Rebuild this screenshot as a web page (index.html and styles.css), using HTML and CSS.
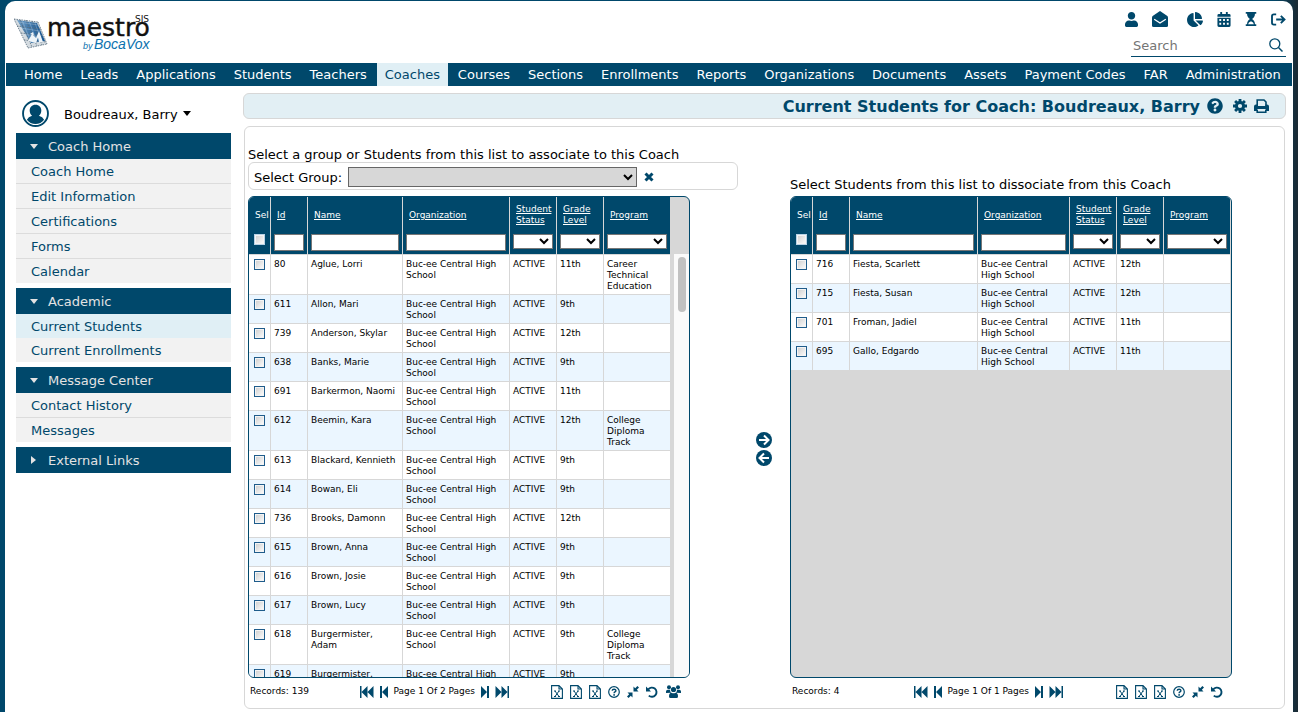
FILE: index.html
```
<!DOCTYPE html>
<html lang="en">
<head>
	<meta charset="UTF-8">
	<meta name="viewport" content="width=device-width, initial-scale=1.0">
	<title>Current Students for Coach</title>
	<link rel="stylesheet" href="styles.css">
</head>
<body>
	<!-- icon sprite -->
	<svg class="sprite" aria-hidden="true">
		<symbol id="i-user" viewBox="0 0 448 512"><path d="M224 256c70.7 0 128-57.3 128-128S294.7 0 224 0 96 57.3 96 128s57.3 128 128 128zm89.6 32h-16.7c-22.2 10.2-46.9 16-72.9 16s-50.6-5.8-72.9-16h-16.7C60.2 288 0 348.2 0 422.4V464c0 26.500 21.500 48 48 48h352c26.500 0 48-21.500 48-48v-41.600c0-74.200-60.200-134.400-134.400-134.400z"/></symbol>
		<symbol id="i-mail" viewBox="0 0 16 16"><path d="M8 0L1 4.800Q0 5.500 0 6.500V14.500Q0 16 1.500 16h13Q16 16 16 14.500V6.500Q16 5.500 15 4.800z"/><path d="M2.200 8.200L8 12l5.800-3.800" fill="none" stroke="#fff" stroke-width="1.300"/></symbol>
		<symbol id="i-pie" viewBox="0 0 544 512"><path d="M527.79 288H290.5l158.03 158.03c6.04 6.04 15.98 6.53 22.19.68 38.7-36.46 65.32-85.61 73.13-140.86 1.34-9.46-6.51-17.85-16.06-17.85zm-15.83-64.8C503.72 103.74 408.26 8.28 288.8.04 279.68-.59 272 7.1 272 16.24V240h223.77c9.14 0 16.82-7.68 16.19-16.8zM224 288V50.71c0-9.55-8.39-17.4-17.84-16.06C86.99 51.49-4.1 155.6.14 280.37 4.5 408.51 114.83 513.59 243.03 511.98c50.4-.63 96.97-16.87 135.26-44.03 7.9-5.6 8.42-17.23 1.57-24.08L224 288z"/></symbol>
		<symbol id="i-calendar" viewBox="0 0 14 16"><path fill-rule="evenodd" d="M3 0h2v2h4V0h2v2h1.500Q14 2 14 3.500V5H0V3.500Q0 2 1.500 2H3zM0 6h14v8.500Q14 16 12.500 16h-11Q0 16 0 14.500zM2 7.500v2h2v-2zM6 7.500v2h2v-2zM10 7.500v2h2v-2zM2 11.500v2h2v-2zM6 11.500v2h2v-2zM10 11.500v2h2v-2z"/></symbol>
		<symbol id="i-hourglass" viewBox="0 0 12 16"><path d="M0 0h12v2H0zM0 14h12v2H0zM1.500 2h9Q10.500 6 7.200 8 10.500 10 10.500 14h-1.200Q9 11.500 6 10.500 3 11.500 2.700 14H1.500Q1.500 10 4.800 8 1.500 6 1.500 2z"/></symbol>
		<symbol id="i-exit" viewBox="0 0 16 14"><path d="M5.500 1.500H3Q1 1.500 1 3.500v7q0 2 2 2h2.500M5.500 7H14M10.500 3l4 4-4 4" fill="none" stroke="currentColor" stroke-width="2"/></symbol>
		<symbol id="i-search" viewBox="0 0 14 14"><circle cx="5.800" cy="5.800" r="5" fill="none" stroke="currentColor" stroke-width="1.300"/><path d="M9.500 9.500l4 4" stroke="currentColor" stroke-width="1.500"/></symbol>
		<symbol id="i-help" viewBox="0 0 512 512"><path d="M504 256c0 136.997-111.043 248-248 248S8 392.997 8 256C8 119.083 119.043 8 256 8s248 111.083 248 248zM262.655 90c-54.497 0-89.255 22.957-116.549 63.758-3.536 5.286-2.353 12.415 2.715 16.258l34.699 26.31c5.205 3.947 12.621 3.008 16.665-2.122 17.864-22.658 30.113-35.797 57.303-35.797 20.429 0 45.698 13.148 45.698 32.958 0 14.976-12.363 22.667-32.534 33.976C247.128 238.528 216 254.941 216 296v4c0 6.627 5.373 12 12 12h56c6.627 0 12-5.373 12-12v-1.333c0-28.462 83.186-29.647 83.186-106.667 0-58.002-60.165-102-116.531-102zM256 338c-25.365 0-46 20.635-46 46 0 25.364 20.635 46 46 46s46-20.636 46-46c0-25.365-20.635-46-46-46z"/></symbol>
		<symbol id="i-gear" viewBox="0 0 14 14"><circle cx="7" cy="7" r="3.600" fill="none" stroke="currentColor" stroke-width="3"/><path d="M7 0v3M7 11v3M0 7h3M11 7h3M2.100 2.100l2 2M9.900 9.900l2 2M2.100 11.900l2-2M9.900 4.100l2-2" stroke="currentColor" stroke-width="2.800"/></symbol>
		<symbol id="i-print" viewBox="0 0 15 14"><path d="M3.200 7V1h6.800l2 2v4M3.200 10.500v2.700h8.600v-2.700" fill="none" stroke="currentColor" stroke-width="1.600"/><path fill-rule="evenodd" d="M2 5.500h1.500V7h8V5.500H13q2 0 2 2V12h-3v-2H3v2H0V7.500q0-2 2-2z"/></symbol>
		<symbol id="i-avatar" viewBox="0 0 26 26"><circle cx="13" cy="13" r="12" fill="#fff" stroke="currentColor" stroke-width="1.800"/><path d="M13 4.500c3.500 0 5.600 2.500 5.600 5.500 0 2-.8 4-2.300 5.200q3.700.8 5 3.800A10.300 10.300 0 0 1 4.700 19q1.300-3 5-3.800C8.200 14 7.400 12 7.400 10c0-3 2.100-5.500 5.600-5.500z"/></symbol>
		<symbol id="i-close" viewBox="0 0 10 10"><path d="M1.500 1.500l7 7M8.500 1.500l-7 7" stroke="currentColor" stroke-width="3"/></symbol>
		<symbol id="i-right" viewBox="0 0 16 16"><circle cx="8" cy="8" r="8"/><path d="M3 8h9M8 3.500L12.500 8 8 12.500" fill="none" stroke="#fff" stroke-width="2"/></symbol>
		<symbol id="i-left" viewBox="0 0 16 16"><circle cx="8" cy="8" r="8"/><path d="M13 8H4M8 3.500L3.500 8 8 12.500" fill="none" stroke="#fff" stroke-width="2"/></symbol>
		<symbol id="i-first" viewBox="0 0 14 12"><path d="M0 0h1.500v12H0zM1.500 6L7.500 0v12zM7.500 6L13.500 0v12z"/></symbol>
		<symbol id="i-prev" viewBox="0 0 8 12"><path d="M0 0h2v12H0zM2 6l6-6v12z"/></symbol>
		<symbol id="i-next" viewBox="0 0 8 12"><path d="M6 0h2v12H6zM6 6L0 0v12z"/></symbol>
		<symbol id="i-last" viewBox="0 0 14 12"><path d="M12.500 0H14v12h-1.500zM12.500 6L6.500 0v12zM6.500 6L.5 0v12z"/></symbol>
		<symbol id="i-file" viewBox="0 0 12 14"><path d="M.6.6h7.400l3.400 3.400v9.400H.6zM8 .6V4h3.400" fill="none" stroke="currentColor" stroke-width="1.100"/><path d="M4 6l4 5.500M8 6l-4 5.500M3 6h2M7 6h2M3 11.500h2M7 11.500h2" fill="none" stroke="currentColor"/></symbol>
		<symbol id="i-ask" viewBox="0 0 12 12"><circle cx="6" cy="6" r="5.300" fill="none" stroke="currentColor" stroke-width="1.200"/><path d="M4.200 4.800C4.300 2.700 7.900 2.700 7.900 4.700 7.900 6 6.100 5.900 6.100 7.200" fill="none" stroke="currentColor" stroke-width="1.400"/><circle cx="6.100" cy="8.900" r=".9"/></symbol>
		<symbol id="i-shrink" viewBox="0 0 12 12"><path d="M6.500 0.500v5h5L9.800 3.800 12 1.600 10.400 0 8.200 2.200zM5.500 11.500v-5h-5l1.700 1.700L0 10.400 1.600 12l2.200-2.200z"/></symbol>
		<symbol id="i-undo" viewBox="0 0 12 12"><path d="M0 0.500v5h5L3.300 3.800z"/><path d="M2.200 3.500A4.600 4.600 0 1 1 2.800 9.600" fill="none" stroke="currentColor" stroke-width="1.900"/></symbol>
		<symbol id="i-group" viewBox="0 0 15 13"><circle cx="3" cy="2.200" r="2"/><circle cx="12" cy="2.200" r="2"/><circle cx="7.500" cy="4.500" r="2.600"/><path d="M0 8V6.500Q0 4.700 1.800 4.700H4q0 2 1.200 3zM15 8V6.500q0-1.800-1.800-1.800H11q0 2-1.200 3zM3 11.500q0-3.700 2.500-3.700 2 1 4 0 2.500 0 2.500 3.700 0 1.500-1.500 1.500h-6Q3 13 3 11.500z"/></symbol>
	</svg>

	<div class="page">
		<header class="topbar">
			<a href="#" class="logo" aria-label="Maestro SIS by BocaVox">
				<svg width="140" height="38" viewBox="0 0 140 38">
					<defs>
						<linearGradient id="tile" x1="0" x2="1"><stop offset="0" stop-color="#6b9cc6"/><stop offset="1" stop-color="#0f4f8c"/></linearGradient>
					</defs>
					<path d="M0 5l24 3 9 22-19 4z" fill="#d4dbe0"/>
					<path d="M3 6l20 3 8 18-14 2z" fill="url(#tile)"/>
					<path d="M0 5l24 3M3 12l24 3M7 19l22 3M10 26l22 2M0 5l14 29M6 6l12 27M12 6l11 26M18 7l10 24M24 8l9 22M14 34l19-4" stroke="#566b7c" stroke-width=".8" stroke-dasharray="1.500 1" fill="none"/>
					<path d="M4 8l20 3M6 14l20 3M9 20l18 3M8 6l9 22M15 7l8 21M21 9l6 17" stroke="#cfe2f2" stroke-width=".3" fill="none"/>
					<path d="M14 27l4-7 4 4 3-7 4 11-4 .5-1-5-2 5.500zM16 20l3-2 1 3z" fill="#eef4f8"/>
					<text x="33" y="22" class="logo-name">maestro</text>
					<text x="121" y="8" class="logo-sis">SIS</text>
					<text x="69" y="35" class="logo-by">by</text>
					<text x="80" y="35" class="logo-vendor">BocaVox</text>
				</svg>
			</a>
			<div class="topbar-right">
				<div class="quick-links">
					<a href="#" aria-label="Profile"><svg width="13" height="15"><use href="#i-user"/></svg></a>
					<a href="#" class="mail" aria-label="Messages"><svg width="16" height="16"><use href="#i-mail"/></svg></a>
					<a href="#" aria-label="Reports"><svg width="16" height="15"><use href="#i-pie"/></svg></a>
					<a href="#" aria-label="Calendar"><svg width="14" height="15"><use href="#i-calendar"/></svg></a>
					<a href="#" aria-label="Time clock"><svg width="12" height="14"><use href="#i-hourglass"/></svg></a>
					<a href="#" aria-label="Log out"><svg width="15" height="13"><use href="#i-exit"/></svg></a>
				</div>
				<form class="search">
					<input type="text" placeholder="Search" aria-label="Search">
					<button type="button" aria-label="Run search"><svg width="14" height="14"><use href="#i-search"/></svg></button>
				</form>
			</div>
		</header>

		<nav class="main-nav">
			<a href="#">Home</a>
			<a href="#">Leads</a>
			<a href="#">Applications</a>
			<a href="#">Students</a>
			<a href="#">Teachers</a>
			<a href="#" class="active">Coaches</a>
			<a href="#">Courses</a>
			<a href="#">Sections</a>
			<a href="#">Enrollments</a>
			<a href="#">Reports</a>
			<a href="#">Organizations</a>
			<a href="#">Documents</a>
			<a href="#">Assets</a>
			<a href="#">Payment Codes</a>
			<a href="#">FAR</a>
			<a href="#">Administration</a>
		</nav>

		<div class="body">
			<aside class="sidebar">
				<button type="button" class="user">
					<svg width="27" height="27"><use href="#i-avatar"/></svg>
					<span>Boudreaux, Barry</span>
					<i class="caret"></i>
				</button>
				<section>
					<button type="button" class="side-head"><i class="caret"></i>Coach Home</button>
					<a href="#">Coach Home</a>
					<a href="#">Edit Information</a>
					<a href="#">Certifications</a>
					<a href="#">Forms</a>
					<a href="#">Calendar</a>
				</section>
				<section>
					<button type="button" class="side-head"><i class="caret"></i>Academic</button>
					<a href="#" class="active">Current Students</a>
					<a href="#">Current Enrollments</a>
				</section>
				<section>
					<button type="button" class="side-head"><i class="caret"></i>Message Center</button>
					<a href="#">Contact History</a>
					<a href="#">Messages</a>
				</section>
				<section>
					<button type="button" class="side-head"><i class="caret closed"></i>External Links</button>
				</section>
			</aside>

			<main>
				<div class="title-bar">
					<h1>Current Students for Coach: Boudreaux, Barry</h1>
					<a href="#" class="title-help" aria-label="Help"><svg width="16" height="16"><use href="#i-help"/></svg></a>
					<a href="#" aria-label="Settings"><svg width="14" height="14"><use href="#i-gear"/></svg></a>
					<a href="#" aria-label="Print"><svg width="15" height="14"><use href="#i-print"/></svg></a>
				</div>

				<div class="panel">
					<div class="intro">
						<p>Select a group or Students from this list to associate to this Coach</p>
						<div class="group-box">
							<label for="group">Select Group:</label>
							<select id="group"><option></option></select>
							<button type="button" aria-label="Clear group"><svg width="10" height="10"><use href="#i-close"/></svg></button>
						</div>
					</div>
					<div class="intro intro-right">
						<p>Select Students from this list to dissociate from this Coach</p>
					</div>

					<div class="list">
						<div class="list-frame">
							<table class="has-scroll">
								<colgroup><col class="c-sel"><col class="c-id"><col class="c-name"><col class="c-org"><col class="c-status"><col class="c-grade"><col class="c-program"></colgroup>
								<thead>
									<tr class="labels"><th>Sel</th><th><a href="#">Id</a></th><th><a href="#">Name</a></th><th><a href="#">Organization</a></th><th><a href="#">Student Status</a></th><th><a href="#">Grade Level</a></th><th><a href="#">Program</a></th></tr>
									<tr class="filters">
										<td><input type="checkbox" aria-label="Select all"></td>
										<td><input type="text" aria-label="Filter id"></td>
										<td><input type="text" aria-label="Filter name"></td>
										<td><input type="text" aria-label="Filter organization"></td>
										<td><select aria-label="Filter status"><option></option></select></td>
										<td><select aria-label="Filter grade"><option></option></select></td>
										<td><select aria-label="Filter program"><option></option></select></td>
									</tr>
								</thead>
								<tbody>
									<tr><td><input type="checkbox" aria-label="Select 80"></td><td>80</td><td>Aglue, Lorri</td><td>Buc-ee Central High School</td><td>ACTIVE</td><td>11th</td><td>Career Technical Education</td></tr>
									<tr><td><input type="checkbox" aria-label="Select 611"></td><td>611</td><td>Allon, Mari</td><td>Buc-ee Central High School</td><td>ACTIVE</td><td>9th</td><td></td></tr>
									<tr><td><input type="checkbox" aria-label="Select 739"></td><td>739</td><td>Anderson, Skylar</td><td>Buc-ee Central High School</td><td>ACTIVE</td><td>12th</td><td></td></tr>
									<tr><td><input type="checkbox" aria-label="Select 638"></td><td>638</td><td>Banks, Marie</td><td>Buc-ee Central High School</td><td>ACTIVE</td><td>9th</td><td></td></tr>
									<tr><td><input type="checkbox" aria-label="Select 691"></td><td>691</td><td>Barkermon, Naomi</td><td>Buc-ee Central High School</td><td>ACTIVE</td><td>11th</td><td></td></tr>
									<tr><td><input type="checkbox" aria-label="Select 612"></td><td>612</td><td>Beemin, Kara</td><td>Buc-ee Central High School</td><td>ACTIVE</td><td>12th</td><td>College Diploma Track</td></tr>
									<tr><td><input type="checkbox" aria-label="Select 613"></td><td>613</td><td>Blackard, Kennieth</td><td>Buc-ee Central High School</td><td>ACTIVE</td><td>9th</td><td></td></tr>
									<tr><td><input type="checkbox" aria-label="Select 614"></td><td>614</td><td>Bowan, Eli</td><td>Buc-ee Central High School</td><td>ACTIVE</td><td>9th</td><td></td></tr>
									<tr><td><input type="checkbox" aria-label="Select 736"></td><td>736</td><td>Brooks, Damonn</td><td>Buc-ee Central High School</td><td>ACTIVE</td><td>12th</td><td></td></tr>
									<tr><td><input type="checkbox" aria-label="Select 615"></td><td>615</td><td>Brown, Anna</td><td>Buc-ee Central High School</td><td>ACTIVE</td><td>9th</td><td></td></tr>
									<tr><td><input type="checkbox" aria-label="Select 616"></td><td>616</td><td>Brown, Josie</td><td>Buc-ee Central High School</td><td>ACTIVE</td><td>9th</td><td></td></tr>
									<tr><td><input type="checkbox" aria-label="Select 617"></td><td>617</td><td>Brown, Lucy</td><td>Buc-ee Central High School</td><td>ACTIVE</td><td>9th</td><td></td></tr>
									<tr><td><input type="checkbox" aria-label="Select 618"></td><td>618</td><td>Burgermister, Adam</td><td>Buc-ee Central High School</td><td>ACTIVE</td><td>9th</td><td>College Diploma Track</td></tr>
									<tr><td><input type="checkbox" aria-label="Select 619"></td><td>619</td><td>Burgermister,</td><td>Buc-ee Central High School</td><td>ACTIVE</td><td>9th</td><td></td></tr>
								</tbody>
							</table>
							<div class="scroll-track"><div class="scroll-thumb"></div></div>
						</div>
						<div class="list-foot">
							<span class="records">Records: 139</span>
							<div class="pager">
								<button type="button" aria-label="First page"><svg width="14" height="12"><use href="#i-first"/></svg></button>
								<button type="button" aria-label="Previous page"><svg width="8" height="12"><use href="#i-prev"/></svg></button>
								<span>Page 1 Of 2 Pages</span>
								<button type="button" aria-label="Next page"><svg width="8" height="12"><use href="#i-next"/></svg></button>
								<button type="button" aria-label="Last page"><svg width="14" height="12"><use href="#i-last"/></svg></button>
							</div>
							<div class="tools">
								<button type="button" aria-label="Export page"><svg width="12" height="14"><use href="#i-file"/></svg></button>
								<button type="button" aria-label="Export all"><svg width="12" height="14"><use href="#i-file"/></svg></button>
								<button type="button" aria-label="Export selected"><svg width="12" height="14"><use href="#i-file"/></svg></button>
								<button type="button" aria-label="Help"><svg width="12" height="12"><use href="#i-ask"/></svg></button>
								<button type="button" aria-label="Shrink"><svg width="12" height="12"><use href="#i-shrink"/></svg></button>
								<button type="button" aria-label="Reset"><svg width="12" height="12"><use href="#i-undo"/></svg></button>
								<button type="button" aria-label="Groups"><svg width="15" height="13"><use href="#i-group"/></svg></button>
							</div>
						</div>
					</div>

					<div class="movers">
						<button type="button" aria-label="Associate selected"><svg width="16" height="16"><use href="#i-right"/></svg></button>
						<button type="button" aria-label="Dissociate selected"><svg width="16" height="16"><use href="#i-left"/></svg></button>
					</div>

					<div class="list">
						<div class="list-frame">
							<table>
								<colgroup><col class="c-sel"><col class="c-id"><col class="c-name"><col class="c-org-narrow"><col class="c-status"><col class="c-grade"><col class="c-program"></colgroup>
								<thead>
									<tr class="labels"><th>Sel</th><th><a href="#">Id</a></th><th><a href="#">Name</a></th><th><a href="#">Organization</a></th><th><a href="#">Student Status</a></th><th><a href="#">Grade Level</a></th><th><a href="#">Program</a></th></tr>
									<tr class="filters">
										<td><input type="checkbox" aria-label="Select all"></td>
										<td><input type="text" aria-label="Filter id"></td>
										<td><input type="text" aria-label="Filter name"></td>
										<td><input type="text" aria-label="Filter organization"></td>
										<td><select aria-label="Filter status"><option></option></select></td>
										<td><select aria-label="Filter grade"><option></option></select></td>
										<td><select aria-label="Filter program"><option></option></select></td>
									</tr>
								</thead>
								<tbody>
									<tr><td><input type="checkbox" aria-label="Select 716"></td><td>716</td><td>Fiesta, Scarlett</td><td>Buc-ee Central High School</td><td>ACTIVE</td><td>12th</td><td></td></tr>
									<tr><td><input type="checkbox" aria-label="Select 715"></td><td>715</td><td>Fiesta, Susan</td><td>Buc-ee Central High School</td><td>ACTIVE</td><td>12th</td><td></td></tr>
									<tr><td><input type="checkbox" aria-label="Select 701"></td><td>701</td><td>Froman, Jadiel</td><td>Buc-ee Central High School</td><td>ACTIVE</td><td>11th</td><td></td></tr>
									<tr><td><input type="checkbox" aria-label="Select 695"></td><td>695</td><td>Gallo, Edgardo</td><td>Buc-ee Central High School</td><td>ACTIVE</td><td>11th</td><td></td></tr>
								</tbody>
							</table>
						</div>
						<div class="list-foot short">
							<span class="records">Records: 4</span>
							<div class="pager">
								<button type="button" aria-label="First page"><svg width="14" height="12"><use href="#i-first"/></svg></button>
								<button type="button" aria-label="Previous page"><svg width="8" height="12"><use href="#i-prev"/></svg></button>
								<span>Page 1 Of 1 Pages</span>
								<button type="button" aria-label="Next page"><svg width="8" height="12"><use href="#i-next"/></svg></button>
								<button type="button" aria-label="Last page"><svg width="14" height="12"><use href="#i-last"/></svg></button>
							</div>
							<div class="tools">
								<button type="button" aria-label="Export page"><svg width="12" height="14"><use href="#i-file"/></svg></button>
								<button type="button" aria-label="Export all"><svg width="12" height="14"><use href="#i-file"/></svg></button>
								<button type="button" aria-label="Export selected"><svg width="12" height="14"><use href="#i-file"/></svg></button>
								<button type="button" aria-label="Help"><svg width="12" height="12"><use href="#i-ask"/></svg></button>
								<button type="button" aria-label="Shrink"><svg width="12" height="12"><use href="#i-shrink"/></svg></button>
								<button type="button" aria-label="Reset"><svg width="12" height="12"><use href="#i-undo"/></svg></button>
							</div>
						</div>
					</div>
				</div>
			</main>
		</div>
	</div>
</body>
</html>
```
FILE: styles.css
```
* {
	box-sizing: border-box;
}

body {
	margin: 0;
	padding: 1px 5px 0;
	height: 100vh;
	background: linear-gradient(90deg, #00486b 98%, #1b2a33 100%);
	color: #000;
	font-family: Verdana, "DejaVu Sans", sans-serif;
	font-size: 13px;
}

a {
	color: #00486b;
	text-decoration: none;
}

svg {
	display: block;
	fill: currentColor;
}

button {
	padding: 0;
	border: none;
	background: none;
	color: #00486b;
	font: inherit;
	cursor: pointer;
}

p, h1 {
	margin: 0;
}

.sprite {
	display: none;
}

.page {
	height: 100%;
	display: flex;
	flex-direction: column;
	background: #fff;
	border-radius: 10px 10px 0 0;
}

/* header */
.topbar {
	height: 62px;
	flex: none;
	display: flex;
	justify-content: space-between;
	padding: 9px 7px 0 9px;
}

.logo {
	padding-top: 4px;
}

.logo-name {
	font-size: 25px;
	fill: #111;
	stroke: #111;
	stroke-width: 0.4;
}

.logo-sis {
	font-size: 9px;
	fill: #111;
}

.logo-by, .logo-vendor {
	font-family: "Liberation Sans", Arial, sans-serif;
	font-style: italic;
	fill: #0b72ae;
}

.logo-by {
	font-size: 9px;
}

.logo-vendor {
	font-size: 14px;
}

.topbar-right {
	display: flex;
	flex-direction: column;
	align-items: flex-end;
}

.quick-links {
	height: 18px;
	display: flex;
	align-items: center;
	gap: 14px;
}

.mail {
	margin-right: 5px;
}

.search {
	width: 155px;
	height: 29px;
	display: flex;
	align-items: center;
	border-bottom: 1px solid #00486b;
	padding: 6px 3px 0 2px;
}

.search input {
	flex: 1;
	min-width: 0;
	padding: 0;
	border: none;
	outline: none;
	background: none;
	font: inherit;
}

.search input::placeholder {
	color: #757575;
}

.main-nav {
	flex: none;
	height: 23px;
	margin: 0 1px;
	padding: 0 3px 0 10px;
	display: flex;
	justify-content: space-between;
	background: #00486b;
}

.main-nav a {
	padding: 0 8px;
	line-height: 23px;
	color: #fff;
	white-space: nowrap;
}

.main-nav a.active {
	background: #e0eff5;
	color: #00486b;
}

.body {
	flex: 1;
	min-height: 0;
	display: flex;
	gap: 12px;
	padding: 7px 7px 3px 11px;
}

/* sidebar */
.sidebar {
	width: 215px;
	flex: none;
}

.user {
	height: 40px;
	display: flex;
	align-items: center;
	padding-left: 6px;
}

.user span {
	margin: 2px 5px 0 15px;
	color: #000;
}

.caret {
	border: 4px solid transparent;
	border-top: 5px solid currentColor;
	border-bottom: none;
}

.caret.closed {
	border: 4px solid transparent;
	border-left: 5px solid currentColor;
	border-right: none;
}

.user .caret {
	color: #000;
}

.sidebar section {
	margin-bottom: 5px;
}

.side-head {
	width: 100%;
	height: 26px;
	display: flex;
	align-items: center;
	gap: 10px;
	padding-left: 14px;
	background: #00486b;
	color: #e3e3e3;
}

.side-head .closed {
	margin: 0 2px 0 1px;
}

.sidebar a {
	display: block;
	padding: 2px 0 0 15px;
	line-height: 22px;
	background: #f2f2f2;
	border-bottom: 1px solid #dcdcdc;
}

.sidebar a:last-child {
	border-bottom: none;
}

.sidebar a.active {
	background: #e0eff5;
	border-bottom: none;
}

/* content */
main {
	flex: 1;
	min-width: 0;
	display: flex;
	flex-direction: column;
}

.title-bar {
	height: 26px;
	flex: none;
	display: flex;
	align-items: center;
	justify-content: flex-end;
	gap: 7px;
	padding-right: 16px;
	background: #e2eff4;
	border: 1px solid #d7d7d7;
	border-radius: 6px;
}

.title-bar h1 {
	font-size: 16px;
	color: #00486b;
}

.title-help {
	margin-right: 3px;
}

.panel {
	flex: 1;
	min-height: 0;
	margin: 7px 1px 0;
	padding: 20px 3px 6px;
	border: 1px solid #d7d7d7;
	border-radius: 6px;
	display: grid;
	grid-template-columns: 490px 52px 442px;
	grid-template-rows: auto 1fr;
	row-gap: 6px;
}

.intro-right {
	grid-column: 3;
	align-self: end;
	margin-bottom: -2px;
}

.intro p {
	line-height: 15px;
}

.group-box {
	height: 28px;
	display: flex;
	align-items: center;
	padding: 2px 5px 0;
	border: 1px solid #d7d7d7;
	border-radius: 6px;
}

.group-box select {
	width: 289px;
	height: 20px;
	margin: 0 7px 0 6px;
	background: #d7d7d7;
	border: 1px solid #666;
	border-radius: 0;
}

.list {
	width: 442px;
	min-height: 0;
	display: flex;
	flex-direction: column;
	font-size: 9px;
	line-height: 11px;
}

.list-frame {
	flex: 1;
	min-height: 0;
	display: flex;
	align-items: flex-start;
	overflow: hidden;
	background: #d7d7d7;
	border: 1px solid #00486b;
	border-radius: 6px;
}

table {
	width: 100%;
	table-layout: fixed;
	border-collapse: separate;
	border-spacing: 0;
}

table.has-scroll {
	width: 422px;
	flex: none;
}

.c-sel { width: 22px; }
.c-id { width: 37px; }
.c-org { width: 107px; }
.c-org-narrow { width: 92px; }
.c-status, .c-grade { width: 47px; }
.c-program { width: 67px; }
.has-scroll .c-name { width: 95px; }

th, td {
	padding: 4px 3px 2px;
	text-align: left;
	vertical-align: top;
	border-right: 1px solid #d7d7d7;
	border-bottom: 1px solid #d7d7d7;
}

tbody tr {
	background: #fff;
}

tbody tr:nth-child(even) {
	background: #ebf6ff;
}

thead {
	background: #00486b;
	color: #fff;
}

.labels th {
	height: 36px;
	padding: 0 0 0 6px;
	vertical-align: middle;
	font-weight: normal;
	overflow: hidden;
	border-bottom: none;
}

.labels a {
	color: #fff;
	text-decoration: underline;
}

.filters td {
	height: 22px;
	padding: 1px 3px 0;
}

.filters input[type="text"], .filters select {
	display: block;
	width: 100%;
	padding: 0;
	background: #fff;
	border: 1px solid #767676;
	border-radius: 0;
	font-size: 9px;
}

.filters input[type="text"] {
	height: 17px;
}

.filters select {
	height: 15px;
}

td input[type="checkbox"] {
	appearance: none;
	display: block;
	width: 11px;
	height: 11px;
	margin: 0 0 0 2px;
	background: linear-gradient(135deg, #ccc, #fff);
	border: 1px solid #1f5c8b;
	box-shadow: inset 0 0 0 1px #f4f4f4;
}

.filters input[type="checkbox"] {
	border-color: #b9d3e6;
}

.scroll-track {
	align-self: stretch;
	width: 15px;
	margin: 57px 0 0 3px;
	padding: 3px;
	background: #fafafa;
}

.scroll-thumb {
	width: 8px;
	height: 55px;
	margin-left: 1px;
	background: #c1c1c1;
	border-radius: 4px;
}

.list-foot {
	height: 24px;
	flex: none;
	display: flex;
	align-items: center;
	padding: 3px 9px 0 2px;
}

.records {
	flex: 1;
}

.pager {
	display: flex;
	align-items: center;
	gap: 6px;
	margin-right: 42px;
}

.short .pager {
	margin-right: 53px;
}

.tools {
	display: flex;
	align-items: center;
	gap: 7px;
}

.tools button:nth-child(7) {
	margin-left: 1px;
}

.movers {
	display: flex;
	flex-direction: column;
	align-items: center;
	justify-content: center;
	gap: 2px;
}
```
